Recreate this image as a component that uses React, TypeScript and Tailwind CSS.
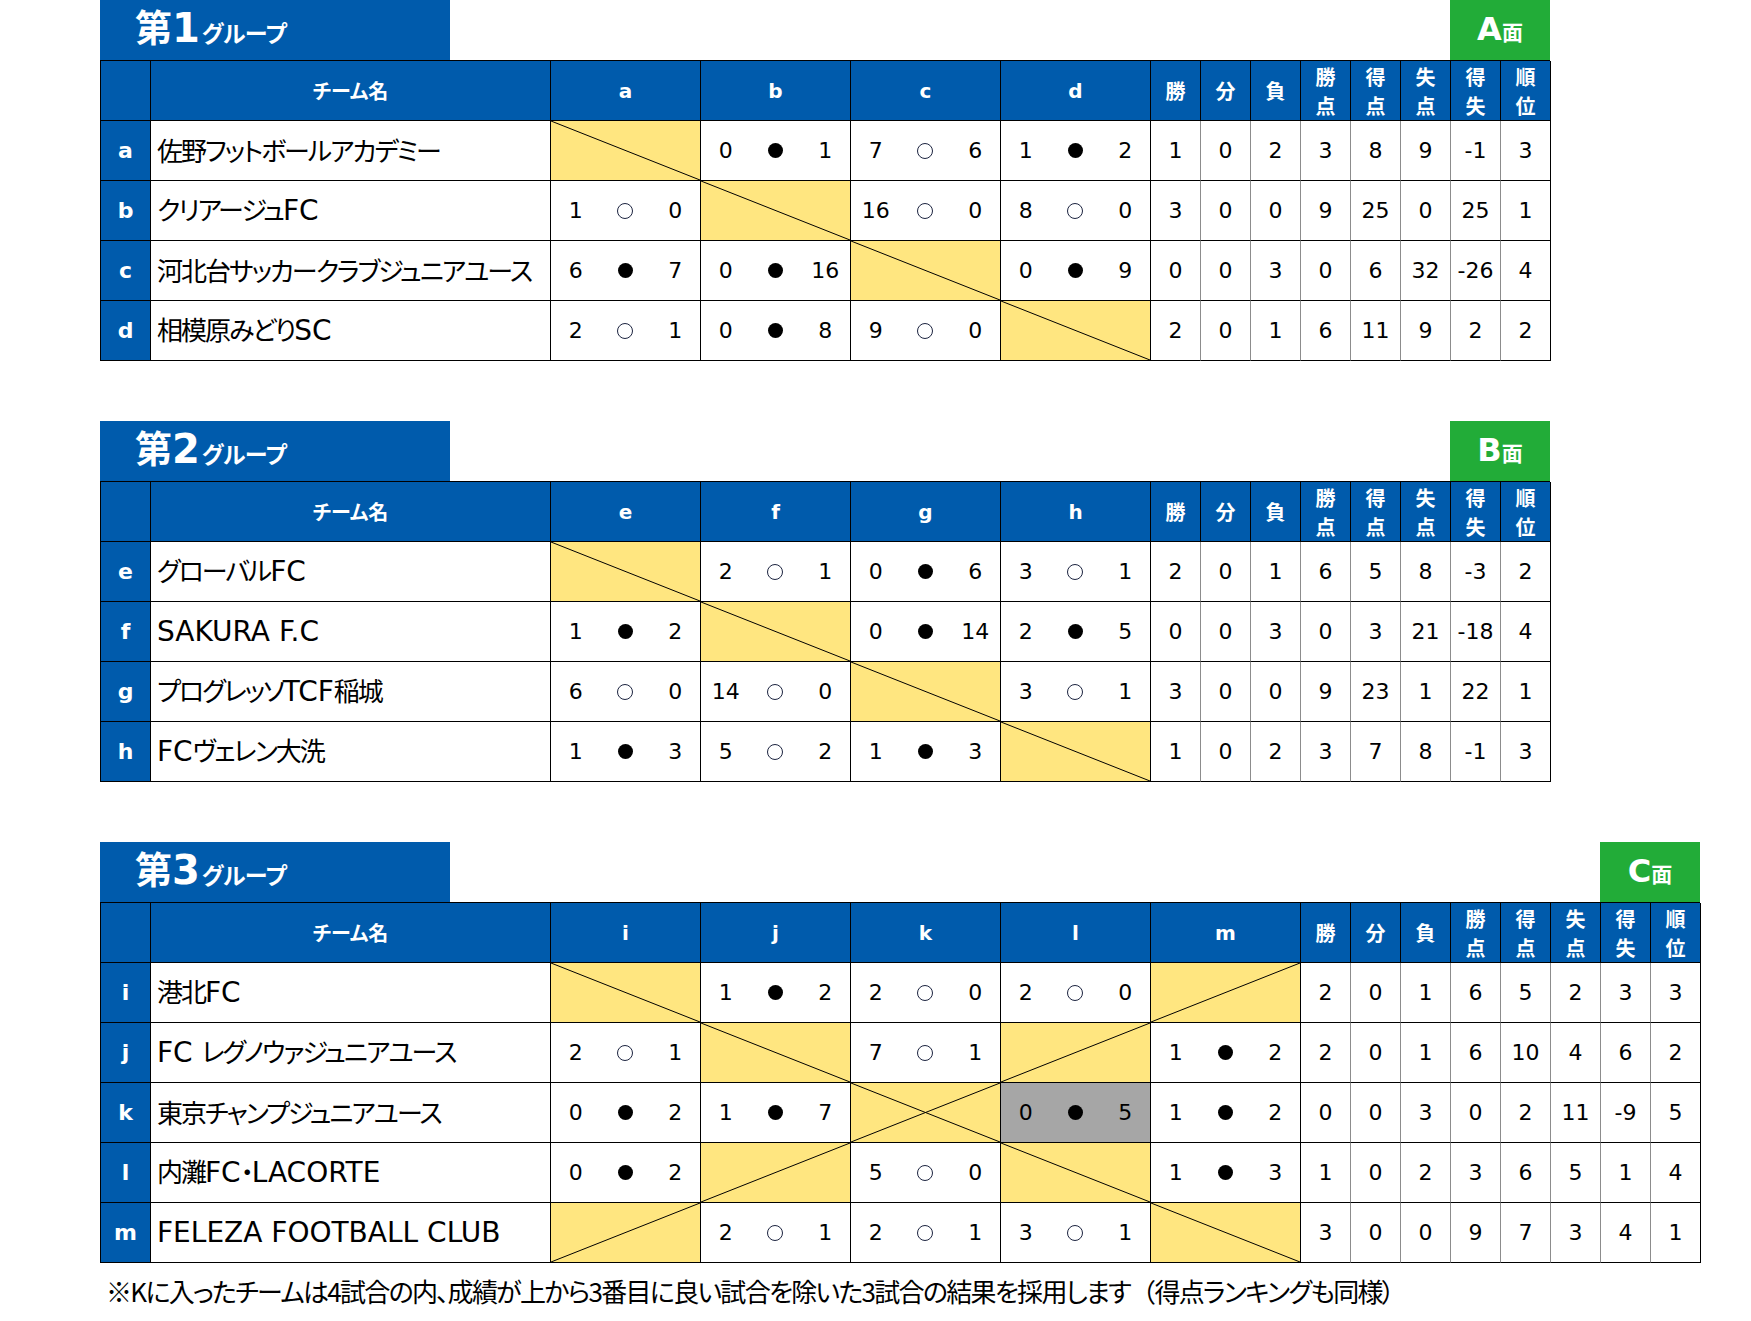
import React from 'react';

type Res = [string, 'w' | 'l', string, boolean?];
type Cell = 'S' | 'X' | 'A' | Res;
interface Row { key: string; name: string; cells: Cell[]; stats: string[] }
interface Group { num: string; court: string; cols: string[]; rows: Row[] }

const groups: Group[] = [
  {
    num: '1', court: 'A', cols: ['a', 'b', 'c', 'd'],
    rows: [
      { key: 'a', name: '佐野フットボールアカデミー', cells: ['S', ['0', 'l', '1'], ['7', 'w', '6'], ['1', 'l', '2']], stats: ['1', '0', '2', '3', '8', '9', '-1', '3'] },
      { key: 'b', name: 'クリアージュFC', cells: [['1', 'w', '0'], 'S', ['16', 'w', '0'], ['8', 'w', '0']], stats: ['3', '0', '0', '9', '25', '0', '25', '1'] },
      { key: 'c', name: '河北台サッカークラブジュニアユース', cells: [['6', 'l', '7'], ['0', 'l', '16'], 'S', ['0', 'l', '9']], stats: ['0', '0', '3', '0', '6', '32', '-26', '4'] },
      { key: 'd', name: '相模原みどりSC', cells: [['2', 'w', '1'], ['0', 'l', '8'], ['9', 'w', '0'], 'S'], stats: ['2', '0', '1', '6', '11', '9', '2', '2'] },
    ],
  },
  {
    num: '2', court: 'B', cols: ['e', 'f', 'g', 'h'],
    rows: [
      { key: 'e', name: 'グローバルFC', cells: ['S', ['2', 'w', '1'], ['0', 'l', '6'], ['3', 'w', '1']], stats: ['2', '0', '1', '6', '5', '8', '-3', '2'] },
      { key: 'f', name: 'SAKURA F.C', cells: [['1', 'l', '2'], 'S', ['0', 'l', '14'], ['2', 'l', '5']], stats: ['0', '0', '3', '0', '3', '21', '-18', '4'] },
      { key: 'g', name: 'プログレッソTCF稲城', cells: [['6', 'w', '0'], ['14', 'w', '0'], 'S', ['3', 'w', '1']], stats: ['3', '0', '0', '9', '23', '1', '22', '1'] },
      { key: 'h', name: 'FCヴェレン大洗', cells: [['1', 'l', '3'], ['5', 'w', '2'], ['1', 'l', '3'], 'S'], stats: ['1', '0', '2', '3', '7', '8', '-1', '3'] },
    ],
  },
  {
    num: '3', court: 'C', cols: ['i', 'j', 'k', 'l', 'm'],
    rows: [
      { key: 'i', name: '港北FC', cells: ['S', ['1', 'l', '2'], ['2', 'w', '0'], ['2', 'w', '0'], 'A'], stats: ['2', '0', '1', '6', '5', '2', '3', '3'] },
      { key: 'j', name: 'FC レグノウァジュニアユース', cells: [['2', 'w', '1'], 'S', ['7', 'w', '1'], 'A', ['1', 'l', '2']], stats: ['2', '0', '1', '6', '10', '4', '6', '2'] },
      { key: 'k', name: '東京チャンプジュニアユース', cells: [['0', 'l', '2'], ['1', 'l', '7'], 'X', ['0', 'l', '5', true], ['1', 'l', '2']], stats: ['0', '0', '3', '0', '2', '11', '-9', '5'] },
      { key: 'l', name: '内灘FC・LACORTE', cells: [['0', 'l', '2'], 'A', ['5', 'w', '0'], 'S', ['1', 'l', '3']], stats: ['1', '0', '2', '3', '6', '5', '1', '4'] },
      { key: 'm', name: 'FELEZA FOOTBALL CLUB', cells: ['A', ['2', 'w', '1'], ['2', 'w', '1'], ['3', 'w', '1'], 'S'], stats: ['3', '0', '0', '9', '7', '3', '4', '1'] },
    ],
  },
];

const statHeads = ['勝', '分', '負', '勝点', '得点', '失点', '得失', '順位'];

const LATIN = /^[A-Za-z0-9 .]+$/;

function Name({ text }: { text: string }) {
  const parts = text.match(/[A-Za-z0-9 .]+|[^A-Za-z0-9 .]+/g) || [];
  return (
    <span className="whitespace-nowrap">
      {parts.map((p, i) =>
        LATIN.test(p) ? (
          <span key={i} className="text-[28px] font-['DejaVu_Sans',sans-serif]">{p}</span>
        ) : (
          <span key={i} className="text-[26px] tracking-[-2px] font-['Noto_Sans_CJK_JP',sans-serif] [font-feature-settings:'palt']">{p}</span>
        )
      )}
    </span>
  );
}

function Mark({ type }: { type: 'w' | 'l' }) {
  return type === 'l' ? (
    <span className="inline-block w-[15px] h-[15px] rounded-full bg-black" />
  ) : (
    <span className="inline-block w-[16px] h-[16px] rounded-full border border-[#1c2440]" />
  );
}

function ScoreCell({ c }: { c: Cell }) {
  if (c === 'S' || c === 'X' || c === 'A') {
    return (
      <div className="relative bg-[#ffe680] border-r border-b border-black">
        <svg className="absolute inset-0 w-full h-full" viewBox="0 0 150 60" preserveAspectRatio="none">
          {(c === 'S' || c === 'X') && (
            <line x1="0" y1="0" x2="150" y2="60" stroke="#000" strokeWidth="1" vectorEffect="non-scaling-stroke" />
          )}
          {(c === 'A' || c === 'X') && (
            <line x1="0" y1="60" x2="150" y2="0" stroke="#000" strokeWidth="1" vectorEffect="non-scaling-stroke" />
          )}
        </svg>
      </div>
    );
  }
  const [a, m, b, gray] = c;
  return (
    <div className={gray ? 'grid grid-cols-3 items-center bg-[#a6a6a6] border-r border-b border-black' : 'grid grid-cols-3 items-center bg-white border-r border-b border-black'}>
      <span className="text-center text-[22px] leading-none">{a}</span>
      <span className="flex justify-center"><Mark type={m} /></span>
      <span className="text-center text-[22px] leading-none">{b}</span>
    </div>
  );
}

function GroupTable({ g }: { g: Group }) {
  const wide = g.cols.length === 5;
  return (
    <div className={wide ? 'w-[1600px]' : 'w-[1450px]'}>
      <div className="flex justify-between h-[60px]">
        <div className="w-[350px] h-[60px] bg-[#005bac] text-white font-bold pl-[35px] pt-[8px] leading-none flex items-baseline">
          <span className="text-[37px] font-['Noto_Sans_CJK_JP',sans-serif]">第</span>
          <span className="text-[40px] font-['DejaVu_Sans',sans-serif]">{g.num}</span>
          <span className="text-[23px] tracking-[-0.5px] font-['Noto_Sans_CJK_JP',sans-serif] [font-feature-settings:'palt'] ml-[2px]">グループ</span>
        </div>
        <div className="w-[100px] h-[60px] bg-[#22ac38] text-white font-bold flex items-baseline justify-center pt-[13px] leading-none">
          <span className="text-[32px] font-['DejaVu_Sans',sans-serif]">{g.court}</span>
          <span className="text-[21px] font-['Noto_Sans_CJK_JP',sans-serif]">面</span>
        </div>
      </div>
      <div
        className={
          wide
            ? 'grid grid-cols-[50px_400px_repeat(5,150px)_repeat(8,50px)] auto-rows-[60px] border-l border-t border-black'
            : 'grid grid-cols-[50px_400px_repeat(4,150px)_repeat(8,50px)] auto-rows-[60px] border-l border-t border-black'
        }
      >
        <div className="bg-[#005bac] border-r border-b border-black" />
        <div className="bg-[#005bac] border-r border-b border-black flex items-center justify-center text-white font-bold text-[20px] font-['Noto_Sans_CJK_JP',sans-serif] [font-feature-settings:'palt']">
          チーム名
        </div>
        {g.cols.map((c) => (
          <div key={c} className="bg-[#005bac] border-r border-b border-black flex items-center justify-center text-white font-bold text-[20px] font-['DejaVu_Sans',sans-serif]">
            {c}
          </div>
        ))}
        {statHeads.map((h) => (
          <div key={h} className="bg-[#005bac] border-r border-b border-black flex flex-col items-center justify-center text-white font-bold text-[20px] leading-[29px] font-['Noto_Sans_CJK_JP',sans-serif]">
            {h.split('').map((ch, i) => (
              <span key={i}>{ch}</span>
            ))}
          </div>
        ))}
        {g.rows.map((r) => (
          <React.Fragment key={r.key}>
            <div className="bg-[#005bac] border-r border-b border-black flex items-center justify-center text-white font-bold text-[22px] font-['DejaVu_Sans',sans-serif] leading-none">
              {r.key}
            </div>
            <div className="bg-white border-r border-b border-black flex items-center pl-[6px] leading-none overflow-hidden">
              <Name text={r.name} />
            </div>
            {r.cells.map((c, i) => (
              <ScoreCell key={i} c={c} />
            ))}
            {r.stats.map((s, i) => (
              <div
                key={i}
                className={
                  i === 7
                    ? 'bg-white border-r border-b border-black flex items-center justify-center text-[22px] leading-none'
                    : 'bg-white border-r border-b border-r-[#8c8c8c] border-b-black flex items-center justify-center text-[22px] leading-none'
                }
              >
                {s}
              </div>
            ))}
          </React.Fragment>
        ))}
      </div>
    </div>
  );
}

export default function App() {
  return (
    <div className="min-h-[1321px] w-[1751px] bg-white text-black pl-[100px] font-['DejaVu_Sans','Noto_Sans_CJK_JP',sans-serif]">
      <div className="flex flex-col gap-[60px]">
        {groups.map((g) => (
          <GroupTable key={g.num} g={g} />
        ))}
      </div>
      <div className="h-[55px] flex items-center pl-[6px] leading-none whitespace-nowrap">
        <span className="text-[26px] tracking-[-1.7px] font-['Noto_Sans_CJK_JP',sans-serif] [font-feature-settings:'palt']">
          ※Kに入ったチームは4試合の内、成績が上から3番目に良い試合を除いた3試合の結果を採用します
        </span>
        <span className="text-[26px] tracking-[-1.7px] font-['Noto_Sans_CJK_JP',sans-serif]">（</span>
        <span className="text-[26px] tracking-[-1.7px] font-['Noto_Sans_CJK_JP',sans-serif] [font-feature-settings:'palt']">
          得点ランキングも同様
        </span>
        <span className="text-[26px] font-['Noto_Sans_CJK_JP',sans-serif] [font-feature-settings:'palt']">）</span>
      </div>
    </div>
  );
}
